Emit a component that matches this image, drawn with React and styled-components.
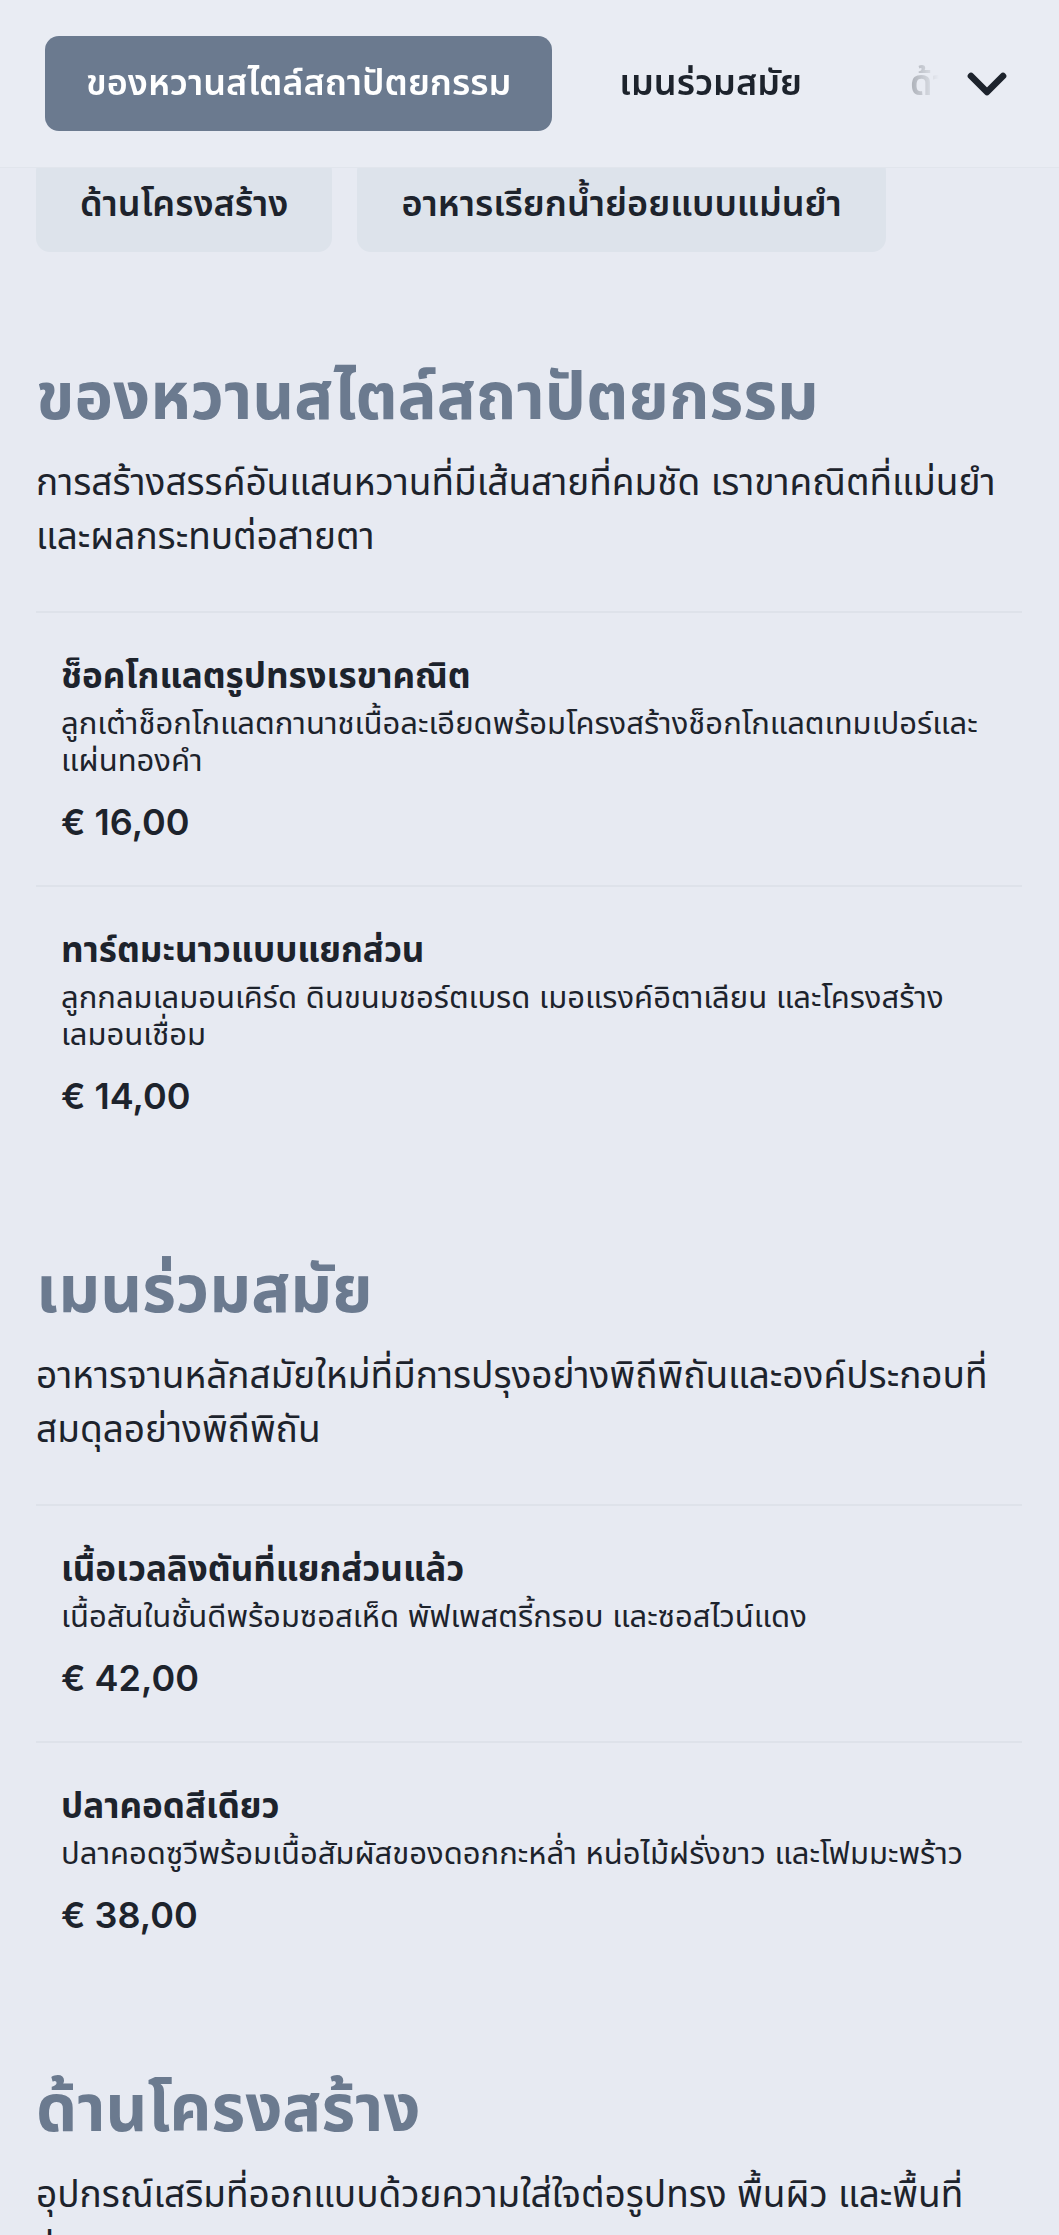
import React from "react";
import styled, { createGlobalStyle } from "styled-components";
import { ChevronDown } from "lucide-react";

const GlobalStyle = createGlobalStyle`
  * { box-sizing: border-box; }
  html, body { margin: 0; padding: 0; }
  body {
    background: #e7eaf2;
    font-family: Inter, "Noto Sans Thai", "Noto Sans", sans-serif;
    color: #1d232c;
  }
`;

const Page = styled.div`
  min-height: 2235px;
  background: #e7eaf2;
`;

const Header = styled.header`
  position: sticky;
  top: 0;
  z-index: 10;
  height: 168px;
  display: flex;
  align-items: center;
  padding: 0 40px 0 45px;
  background: #e9ecf3;
  border-bottom: 1px solid #e1e5ec;
`;

const TabList = styled.nav`
  flex: 1;
  display: flex;
  gap: 26px;
  overflow: hidden;
  -webkit-mask-image: linear-gradient(to right, #000 0, #000 calc(100% - 112px), transparent calc(100% - 16px));
  mask-image: linear-gradient(to right, #000 0, #000 calc(100% - 112px), transparent calc(100% - 16px));
`;

const Tab = styled.button`
  flex: none;
  height: 95px;
  padding: 0 41px;
  border: 0;
  border-radius: 14px;
  font-family: inherit;
  font-size: 36px;
  font-weight: 600;
  white-space: nowrap;
  cursor: pointer;
  background: ${(p) => (p.$active ? "#6b7a8f" : "transparent")};
  color: ${(p) => (p.$active ? "#ffffff" : "#1d232c")};
`;

const ExpandButton = styled.button`
  flex: none;
  width: 64px;
  height: 64px;
  padding: 0;
  border: 0;
  background: transparent;
  color: #1d232c;
  display: flex;
  align-items: center;
  justify-content: center;
  cursor: pointer;
`;

const ChipRow = styled.div`
  display: flex;
  gap: 25px;
  margin-top: -11px;
  padding: 0 36px;
`;

const Chip = styled.button`
  flex: none;
  height: 95px;
  padding: 0 44px;
  border: 0;
  border-radius: 14px;
  background: #dde3eb;
  color: #1d232c;
  font-family: inherit;
  font-size: 36px;
  font-weight: 600;
  white-space: nowrap;
`;

const Main = styled.main`
  padding: 0 37px 0 36px;
`;

const Section = styled.section`
  padding-top: ${(p) => (p.$first ? "102px" : "88px")};
`;

const SectionTitle = styled.h2`
  margin: 0;
  font-size: 65px;
  line-height: 83px;
  font-weight: 700;
  color: #6b7a8f;
`;

const SectionDesc = styled.p`
  max-width: 972px;
  margin: 18px 0 48px;
  font-size: 37px;
  line-height: 54px;
  font-weight: 400;
  color: #1d232c;
`;

const Item = styled.article`
  padding: 40px 25px 43px;
  border-top: 2px solid #dee2ea;
`;

const ItemName = styled.h3`
  margin: 0;
  font-size: 35px;
  line-height: 44px;
  font-weight: 700;
  color: #1d232c;
`;

const ItemDesc = styled.p`
  margin: 7px 0 0;
  font-size: 31px;
  line-height: 37px;
  color: #1d232c;
`;

const Price = styled.div`
  margin-top: 24px;
  font-size: 36px;
  line-height: 40px;
  font-weight: 600;
  color: #1d232c;
`;

const tabs = [
  "ของหวานสไตล์สถาปัตยกรรม",
  "เมนร่วมสมัย",
  "ด้านโครงสร้าง",
  "อาหารเรียกน้ำย่อยแบบแม่นยำ",
];

const sections = [
  {
    title: "ของหวานสไตล์สถาปัตยกรรม",
    desc: "การสร้างสรรค์อันแสนหวานที่มีเส้นสายที่คมชัด เราขาคณิตที่แม่นยำ และผลกระทบต่อสายตา",
    items: [
      {
        name: "ช็อคโกแลตรูปทรงเรขาคณิต",
        desc: "ลูกเต๋าช็อกโกแลตกานาชเนื้อละเอียดพร้อมโครงสร้างช็อกโกแลตเทมเปอร์และแผ่นทองคำ",
        price: "€ 16,00",
      },
      {
        name: "ทาร์ตมะนาวแบบแยกส่วน",
        desc: "ลูกกลมเลมอนเคิร์ด ดินขนมชอร์ตเบรด เมอแรงค์อิตาเลียน และโครงสร้างเลมอนเชื่อม",
        price: "€ 14,00",
      },
    ],
  },
  {
    title: "เมนร่วมสมัย",
    desc: "อาหารจานหลักสมัยใหม่ที่มีการปรุงอย่างพิถีพิถันและองค์ประกอบที่สมดุลอย่างพิถีพิถัน",
    items: [
      {
        name: "เนื้อเวลลิงตันที่แยกส่วนแล้ว",
        desc: "เนื้อสันในชั้นดีพร้อมซอสเห็ด พัฟเพสตรี้กรอบ และซอสไวน์แดง",
        price: "€ 42,00",
      },
      {
        name: "ปลาคอดสีเดียว",
        desc: "ปลาคอดซูวีพร้อมเนื้อสัมผัสของดอกกะหล่ำ หน่อไม้ฝรั่งขาว และโฟมมะพร้าว",
        price: "€ 38,00",
      },
    ],
  },
  {
    title: "ด้านโครงสร้าง",
    desc: "อุปกรณ์เสริมที่ออกแบบด้วยความใส่ใจต่อรูปทรง พื้นผิว และพื้นที่ว่าง",
    items: [],
  },
];

export default function App() {
  return (
    <>
      <GlobalStyle />
      <Page>
        <Header>
          <TabList>
            {tabs.map((t, i) => (
              <Tab key={t} $active={i === 0}>
                {t}
              </Tab>
            ))}
          </TabList>
          <ExpandButton aria-label="แสดงหมวดหมู่ทั้งหมด">
            <ChevronDown size={64} strokeWidth={2.5} />
          </ExpandButton>
        </Header>
        <ChipRow>
          <Chip>ด้านโครงสร้าง</Chip>
          <Chip>อาหารเรียกน้ำย่อยแบบแม่นยำ</Chip>
        </ChipRow>
        <Main>
          {sections.map((s, si) => (
            <Section key={s.title} $first={si === 0}>
              <SectionTitle>{s.title}</SectionTitle>
              <SectionDesc>{s.desc}</SectionDesc>
              {s.items.map((it) => (
                <Item key={it.name}>
                  <ItemName>{it.name}</ItemName>
                  <ItemDesc>{it.desc}</ItemDesc>
                  <Price>{it.price}</Price>
                </Item>
              ))}
            </Section>
          ))}
        </Main>
      </Page>
    </>
  );
}
